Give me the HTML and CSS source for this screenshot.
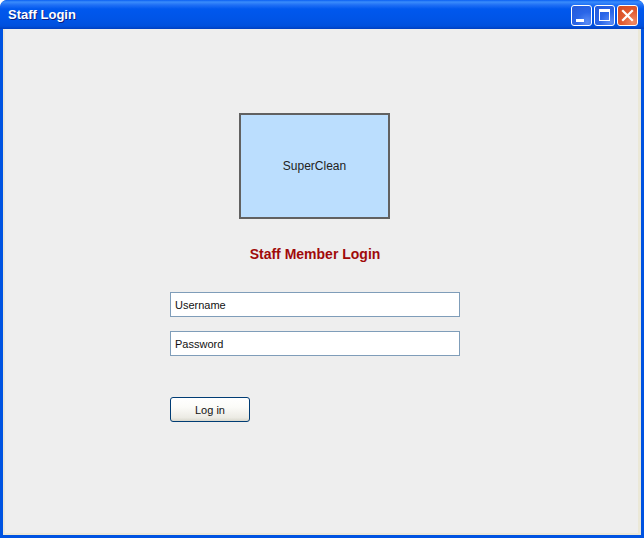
FILE: index.html
```html
<!DOCTYPE html>
<html>
<head>
<meta charset="utf-8">
<title>Staff Login</title>
<link rel="stylesheet" href="styles.css">
</head>
<body>
<div class="window">
  <div class="titlebar">
    <span class="title">Staff Login</span>
    <div class="controls">
      <div class="cbtn blue"><svg width="21" height="21" viewBox="0 0 21 21"><rect x="5" y="14" width="8" height="3" fill="#fff"/></svg></div>
      <div class="cbtn blue"><svg width="21" height="21" viewBox="0 0 21 21"><rect x="5" y="4" width="11" height="3" fill="#fff"/><rect x="5.5" y="4.5" width="10" height="11" fill="none" stroke="#fff"/></svg></div>
      <div class="cbtn red"><svg width="21" height="21" viewBox="0 0 21 21"><path d="M6 6 L15 15 M15 6 L6 15" stroke="#fff" stroke-width="2.2" stroke-linecap="square"/></svg></div>
    </div>
  </div>
  <div class="client">
    <div class="column">
      <div class="logo">SuperClean</div>
      <h1 class="heading">Staff Member Login</h1>
      <input class="field" type="text" value="Username">
      <input class="field pw" type="text" value="Password">
      <button class="login">Log in</button>
    </div>
  </div>
</div>
</body>
</html>
```

FILE: styles.css
```css
html, body {
  margin: 0;
  padding: 0;
  background: #ffffff;
}
.window {
  width: 644px;
  height: 538px;
  box-sizing: border-box;
  background: #0053e1;
  border-radius: 7px 7px 0 0;
  display: flex;
  flex-direction: column;
  overflow: hidden;
}
.titlebar {
  height: 29px;
  flex: none;
  display: flex;
  align-items: center;
  justify-content: space-between;
  padding: 0 6px 0 8px;
  background: linear-gradient(to bottom, #0a5ff2 0px, #3a8cfb 2px, #1f6ff5 5px, #0058ee 9px, #0054e6 20px, #0050dd 26px, #003fc0 29px);
  border-radius: 7px 7px 0 0;
}
.title {
  font-family: "Liberation Sans", Arial, sans-serif;
  font-weight: bold;
  font-size: 13px;
  color: #fff;
  text-shadow: 1px 1px 0 #0a1f80;
  margin-top: -1px;
}
.controls {
  display: flex;
  gap: 2px;
  margin-top: 1px;
}
.cbtn {
  width: 21px;
  height: 21px;
  box-sizing: border-box;
  border: 1px solid #fff;
  border-radius: 3px;
  display: flex;
  align-items: center;
  justify-content: center;
  overflow: hidden;
}
.cbtn svg { display: block; margin: -1px; }
.cbtn.blue {
  background: radial-gradient(circle at 80% 85%, #5a8cf5 0%, #2a66e8 45%, #2459d8 100%);
}
.cbtn.red {
  background: radial-gradient(circle at 80% 85%, #f08a65 0%, #e15a30 50%, #d24a20 100%);
}
.client {
  flex: 1;
  margin: 0 3px 3px 3px;
  background: #eeeeee;
  border-left: 2px solid #e9e7dc;
  border-right: 3px solid #ebe8d8;
  border-bottom: 2px solid #ebe8d8;
  display: flex;
}
.column {
  width: 290px;
  margin-left: 165px;
  padding-top: 84px;
  display: flex;
  flex-direction: column;
  align-items: center;
}
.logo {
  width: 151px;
  height: 106px;
  margin-left: -1px;
  box-sizing: border-box;
  background: #bbdefe;
  border: 2px solid #616161;
  display: flex;
  align-items: center;
  justify-content: center;
  font-family: "Liberation Sans", Arial, sans-serif;
  font-size: 12px;
  color: #222;
}
.heading {
  margin: 26px 0 0 0;
  height: 18px;
  line-height: 18px;
  font-family: "Liberation Sans", Arial, sans-serif;
  font-weight: bold;
  font-size: 14px;
  color: #a00a0a;
}
.field {
  align-self: stretch;
  height: 25px;
  box-sizing: border-box;
  margin: 29px 0 0 0;
  padding: 0 4px;
  border: 1px solid #7f9db9;
  background: #fff;
  font-family: "Liberation Sans", Arial, sans-serif;
  font-size: 11px;
  color: #111;
  outline: none;
}
.field.pw {
  margin-top: 14px;
}
.login {
  align-self: flex-start;
  margin-top: 41px;
  width: 80px;
  height: 25px;
  box-sizing: border-box;
  border: 1px solid #003c74;
  border-radius: 3px;
  background: linear-gradient(to bottom, #ffffff 0%, #fbfbf8 40%, #ecebe4 85%, #d9d7cc 100%);
  font-family: "Liberation Sans", Arial, sans-serif;
  font-size: 11px;
  color: #111;
  padding: 0;
}
```
